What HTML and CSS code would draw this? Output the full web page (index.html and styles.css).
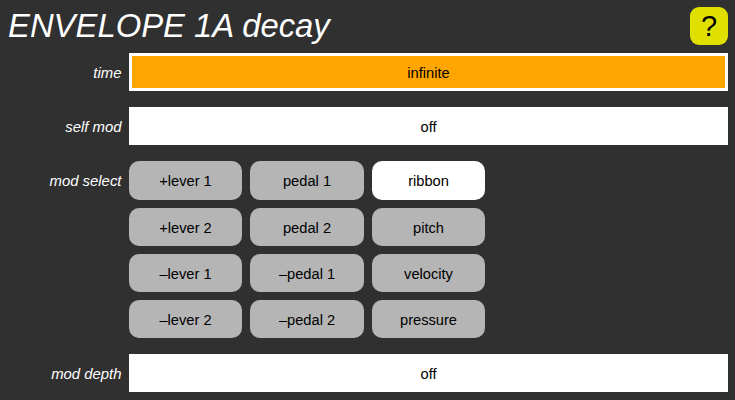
FILE: index.html
```html
<!DOCTYPE html>
<html lang="en">
<head>
<meta charset="utf-8">
<title>ENVELOPE 1A decay</title>
<link rel="stylesheet" href="styles.css">
</head>
<body>
<header class="header">
  <h1 class="title">ENVELOPE 1A decay</h1>
  <button class="help">?</button>
</header>
<main class="params">
  <div class="row">
    <div class="label">time</div>
    <div class="slider active">infinite</div>
  </div>
  <div class="row">
    <div class="label">self mod</div>
    <div class="slider">off</div>
  </div>
  <div class="row">
    <div class="label">mod select</div>
    <div class="options">
      <button class="option">+lever 1</button>
      <button class="option">pedal 1</button>
      <button class="option selected">ribbon</button>
      <button class="option">+lever 2</button>
      <button class="option">pedal 2</button>
      <button class="option">pitch</button>
      <button class="option">–lever 1</button>
      <button class="option">–pedal 1</button>
      <button class="option">velocity</button>
      <button class="option">–lever 2</button>
      <button class="option">–pedal 2</button>
      <button class="option">pressure</button>
    </div>
  </div>
  <div class="row">
    <div class="label">mod depth</div>
    <div class="slider">off</div>
  </div>
</main>
</body>
</html>
```
FILE: styles.css
```css
* {
  box-sizing: border-box;
}

body {
  margin: 0;
  height: 400px;
  overflow: hidden;
  background: #303030;
  color: #fff;
  font: 14.67px/18px "Liberation Sans", Arial, sans-serif;
}

.header {
  display: flex;
  justify-content: space-between;
  height: 53px;
  padding: 7px 7px 0 8px;
}

.title {
  margin: 0;
  font-size: 32.85px;
  line-height: 38px;
  font-weight: normal;
  font-style: italic;
}

.help {
  width: 38px;
  height: 38px;
  padding: 1px 0 0;
  border: 0;
  border-radius: 9px;
  background: #e0e000;
  color: #000;
  font: 29px/37px "Liberation Sans", Arial, sans-serif;
}

.params {
  display: flex;
  flex-direction: column;
  gap: 16px;
  padding-right: 7px;
}

.row {
  display: grid;
  grid-template-columns: 121.5px 1fr;
  column-gap: 7.5px;
}

.label {
  padding-top: 1px;
  font-size: 14.9px;
  line-height: 38px;
  height: 38px;
  text-align: right;
  font-style: italic;
}

.slider {
  height: 38px;
  padding-top: 1px;
  background: #fff;
  color: #000;
  line-height: 38px;
  text-align: center;
}

.active {
  border: 3px solid #fff;
  background: #ffa500;
  line-height: 32px;
}

.options {
  display: grid;
  grid-template-columns: 113px 114px 113px;
  grid-template-rows: 39px 38px 38px 38px;
  gap: 8px;
}

.option {
  padding: 1px 0 0;
  border: 0;
  border-radius: 10px;
  background: #b5b5b5;
  color: #000;
  font: inherit;
}

.selected {
  background: #fff;
}
```
